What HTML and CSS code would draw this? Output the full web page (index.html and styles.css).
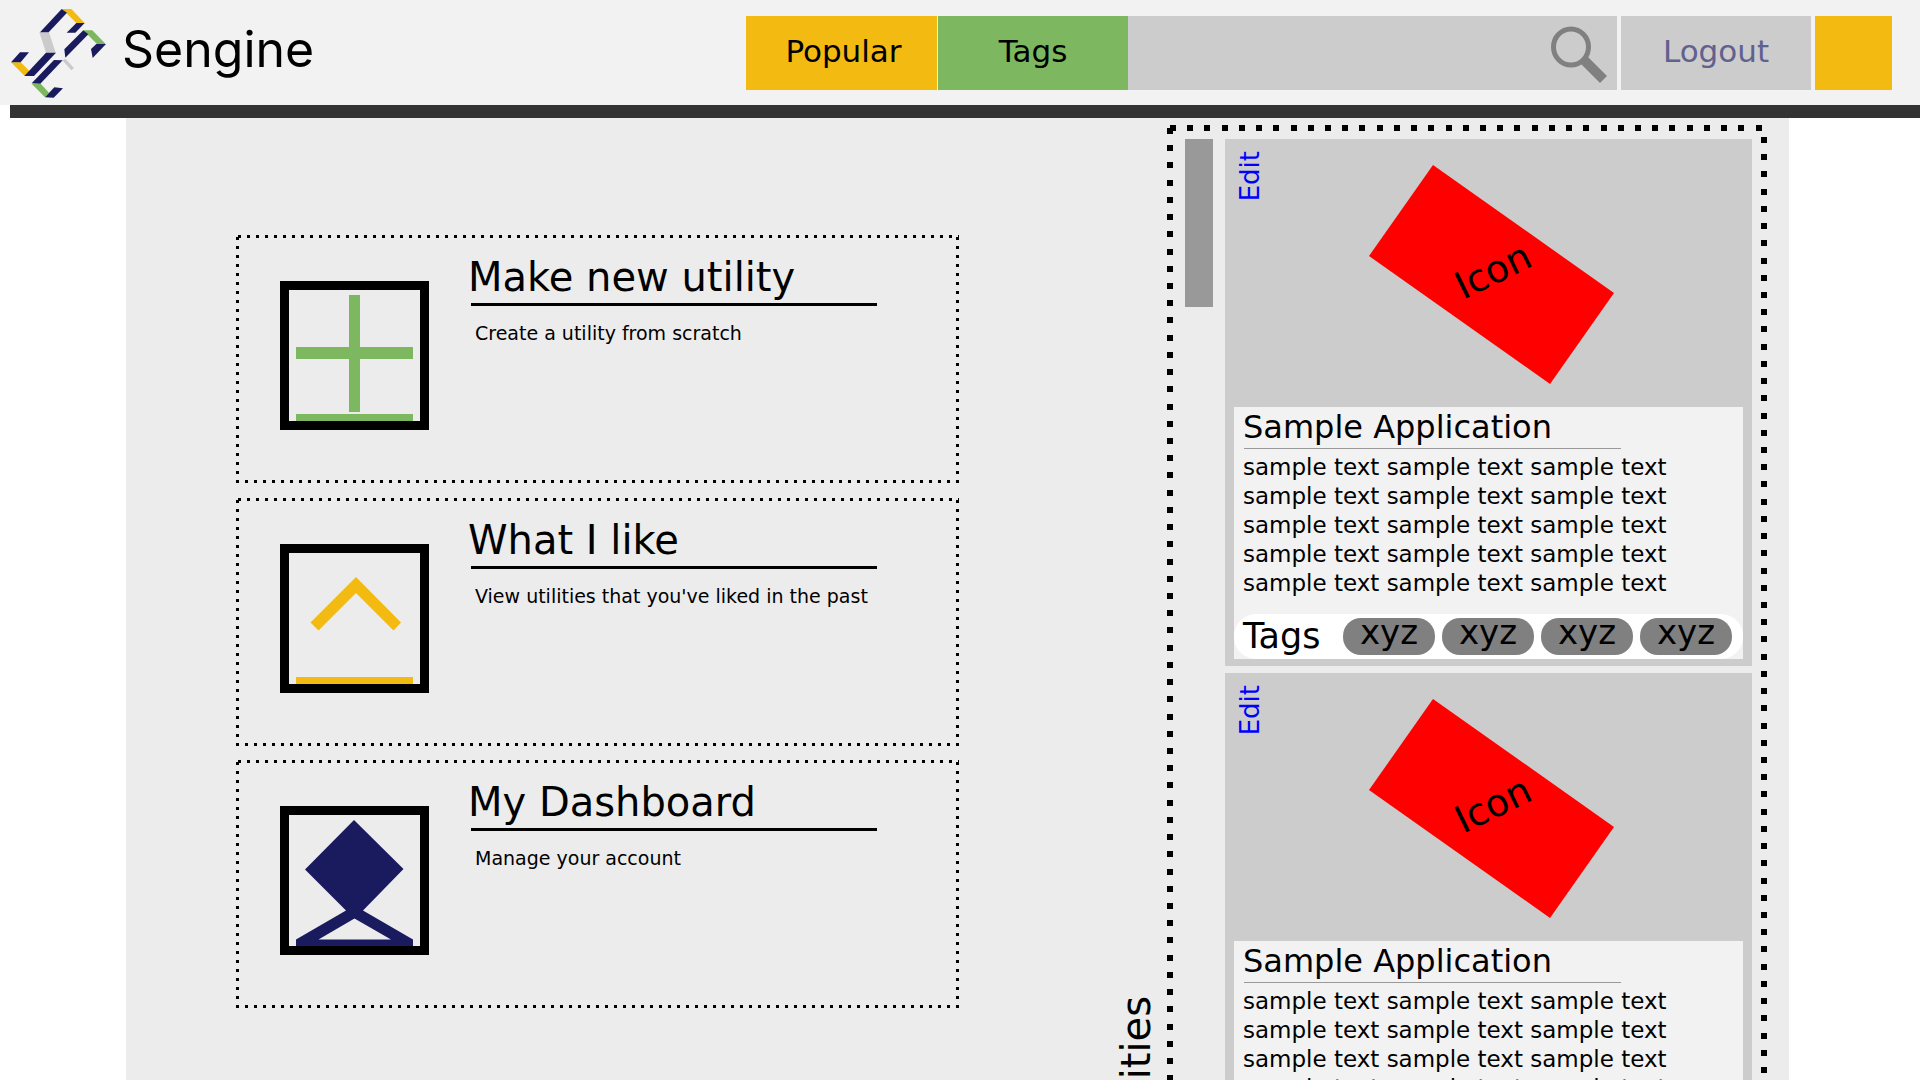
FILE: index.html
```html
<!DOCTYPE html>
<html lang="en">
<head>
<meta charset="utf-8">
<title>Sengine</title>
<link rel="stylesheet" href="styles.css">
</head>
<body>
<header class="header">
  <a class="brand" href="#">
    <svg class="logo" viewBox="24 24 300 276" aria-hidden="true">
      <g fill="#cbcbcb">
        <path d="M118 97H147L167 158H138Z"/>
        <path d="M187 181L197 177L222 204L214 211Z"/>
      </g>
      <g fill="#f3ba12">
        <path d="M187 27H214L254 69H229Z"/>
        <path d="M33 187H62L89 214L74 228Z"/>
      </g>
      <g fill="#7db75f">
        <path d="M250 91H277L317 132H291Z"/>
        <path d="M95 251H122L147 278L135 292Z"/>
      </g>
      <g fill="#1a1a5e">
        <path d="M120 97H146L201 38L185 27Z"/>
        <path d="M229 69H254L226 98H200Z"/>
        <path d="M138 158H168L102 228H73Z"/>
        <path d="M33 187L60 157H87L62 187Z"/>
        <path d="M193 148L250 91L265 103L196 173Z"/>
        <path d="M273 147L289 132H318L278 174Z"/>
        <path d="M95 250L162 180L188 181L121 251Z"/>
        <path d="M135 292L163 262L189 265L161 293Z"/>
      </g>
    </svg>
    <span class="brand-name">Sengine</span>
  </a>
  <nav class="nav">
    <a class="tab tab-popular" href="#">Popular</a>
    <a class="tab tab-tags" href="#">Tags</a>
    <form class="search">
      <input class="search-input" type="search" aria-label="Search">
      <button class="search-button" type="button" aria-label="Search">
        <svg class="search-icon" viewBox="0 0 60 60" aria-hidden="true">
          <ellipse cx="22" cy="23" rx="17.500" ry="18" fill="none" stroke="#808080" stroke-width="5"/>
          <path d="M32 40L38 32L58 52L51 59Z" fill="#808080"/>
        </svg>
      </button>
    </form>
    <button class="tab tab-logout" type="button">Logout</button>
    <button class="profile" type="button" aria-label="Profile"></button>
  </nav>
</header>
<div class="bar"></div>
<main class="main">
  <section class="actions">
    <article class="action">
      <svg class="action-icon" viewBox="0 0 149 149" aria-hidden="true">
        <path d="M69 14H80V66H133V78H80V131H69V78H16V66H69ZM16 133H133V144H16Z" fill="#7db75f"/>
        <rect class="icon-frame" x="4.5" y="4.5" width="140" height="140"/>
      </svg>
      <div class="action-body">
        <h2 class="action-title">Make new utility</h2>
        <p class="action-text">Create a utility from scratch</p>
      </div>
    </article>
    <article class="action">
      <svg class="action-icon" viewBox="0 0 149 149" aria-hidden="true">
        <path d="M76 33L121 78.500L113.500 86.500L76 49L38.500 86.500L30.500 78.500ZM16 133H133V144H16Z" fill="#f3ba12"/>
        <rect class="icon-frame" x="4.5" y="4.5" width="140" height="140"/>
      </svg>
      <div class="action-body">
        <h2 class="action-title">What I like</h2>
        <p class="action-text">View utilities that you've liked in the past</p>
      </div>
    </article>
    <article class="action">
      <svg class="action-icon" viewBox="0 0 149 149" aria-hidden="true">
        <path fill-rule="evenodd" d="M74 14L123.500 63L83 104.500L133 133.500V144H16V133.500L66 104.500L25 63.500ZM74.500 112.500L38.500 133.500H111Z" fill="#1a1a5e"/>
        <rect class="icon-frame" x="4.5" y="4.5" width="140" height="140"/>
      </svg>
      <div class="action-body">
        <h2 class="action-title">My Dashboard</h2>
        <p class="action-text">Manage your account</p>
      </div>
    </article>
  </section>
  <h2 class="side-label">Utilities</h2>
  <section class="feed">
    <div class="thumb"></div>
    <div class="apps">
      <article class="app">
        <div class="app-cover">
          <a class="edit" href="#">Edit</a>
          <svg class="cover" viewBox="0 0 246 220" role="img" aria-label="Icon">
            <path d="M64 0L245 128L181 219L0 91Z" fill="#f00"/>
            <text transform="translate(94 135) rotate(-26)">Icon</text>
          </svg>
        </div>
        <div class="app-info">
          <h3 class="app-title">Sample Application</h3>
          <p class="app-text">sample text sample text sample text<br>sample text sample text sample text<br>sample text sample text sample text<br>sample text sample text sample text<br>sample text sample text sample text</p>
          <div class="tags">
            <span class="tags-label">Tags</span>
            <a class="tag" href="#">xyz</a>
            <a class="tag" href="#">xyz</a>
            <a class="tag" href="#">xyz</a>
            <a class="tag" href="#">xyz</a>
          </div>
        </div>
      </article>
      <article class="app">
        <div class="app-cover">
          <a class="edit" href="#">Edit</a>
          <svg class="cover" viewBox="0 0 246 220" role="img" aria-label="Icon">
            <path d="M64 0L245 128L181 219L0 91Z" fill="#f00"/>
            <text transform="translate(94 135) rotate(-26)">Icon</text>
          </svg>
        </div>
        <div class="app-info">
          <h3 class="app-title">Sample Application</h3>
          <p class="app-text">sample text sample text sample text<br>sample text sample text sample text<br>sample text sample text sample text<br>sample text sample text sample text<br>sample text sample text sample text</p>
          <div class="tags">
            <span class="tags-label">Tags</span>
            <a class="tag" href="#">xyz</a>
            <a class="tag" href="#">xyz</a>
            <a class="tag" href="#">xyz</a>
            <a class="tag" href="#">xyz</a>
          </div>
        </div>
      </article>
    </div>
  </section>
</main>
</body>
</html>
```
FILE: styles.css
```css
* {
  box-sizing: border-box;
}

body {
  height: 100vh;
  margin: 0;
  overflow: hidden;
  background: #fff;
  color: #000;
  font-family: "DejaVu Sans", sans-serif;
}

h2, h3, p {
  margin: 0;
  font-weight: 400;
}

a {
  color: inherit;
  text-decoration: none;
}

button, input {
  border: 0;
  padding: 0;
  font: inherit;
}

/* Header */
.header {
  display: flex;
  align-items: flex-start;
  padding: 8px 28px 0 8px;
  height: 105px;
  background: #f2f2f2;
}

.brand {
  display: flex;
  flex: 0 0 738px;
  gap: 14px;
}

.logo {
  width: 100px;
  height: 92px;
}

.brand-name {
  font: 50px/82px Inter, sans-serif;
}

.nav {
  display: flex;
  flex: 1;
  min-width: 0;
  height: 82px;
  padding-top: 8px;
}

.tab {
  flex: 0 0 190px;
  padding: 0;
  background: #ccc;
  font-size: 31px;
  line-height: 70px;
  text-align: center;
}

.tab-popular {
  flex-basis: 191px;
  margin-right: 1px;
  background: #f3ba12;
  padding-left: 4px;
}

.tab-tags {
  background: #7db75f;
}

.search {
  display: flex;
  flex: 1;
  min-width: 0;
  margin-right: 4px;
  background: #ccc;
}

.search-input {
  flex: 1;
  min-width: 0;
  padding: 0 16px;
  background: none;
  font-size: 31px;
}

.search-button {
  display: flex;
  padding: 8px 8px 0 0;
  background: none;
}

.search-icon {
  width: 60px;
  height: 60px;
}

.tab-logout {
  margin-right: 4px;
  padding-bottom: 4px;
  color: #61618f;
}

.profile {
  flex: 0 0 77px;
  background: #f3ba12;
}

.bar {
  height: 13px;
  margin-left: 10px;
  background: #333;
}

/* Page body */
.main {
  display: flex;
  margin: 0 131px 0 126px;
  padding: 7px 22px 0 110px;
  background: #ececec;
}

/* Action cards, framed by square dots */
.actions {
  display: grid;
  flex: 1;
  align-self: flex-start;
  align-content: space-between;
  min-height: 773px;
  margin: 110px 153px 0 0;
}

.action {
  --across: repeating-linear-gradient(to right, #000 0 3px, transparent 3px 9px);
  --down: repeating-linear-gradient(to bottom, #000 0 3px, transparent 3px 9px);
  display: flex;
  gap: 39px;
  min-height: 248px;
  padding: 0 44px;
  background:
    var(--across) 2px 0 / 100% 3px no-repeat,
    var(--across) 0 100% / 100% 3px no-repeat,
    var(--down) 0 2px / 3px 100% no-repeat,
    var(--down) 100% 2px / 3px 100% no-repeat;
}

.action-icon {
  flex: none;
  width: 149px;
  height: 149px;
  margin-top: 46px;
}

.icon-frame {
  fill: none;
  stroke: #000;
  stroke-width: 9px;
}

.action-body {
  padding-top: 17px;
}

.action-title {
  font-size: 40px;
  line-height: 50px;
}

.action-title::after {
  content: "";
  display: block;
  width: 406px;
  height: 3px;
  margin: 1px 0 0 3px;
  background: #000;
}

.action-text {
  padding: 15px 0 0 7px;
  font-size: 19px;
  line-height: 24px;
}

/* Vertical heading beside the feed */
.side-label {
  align-self: flex-end;
  margin: 0 7px 68px 0;
  font-size: 40px;
  line-height: 48px;
  writing-mode: vertical-rl;
  transform: rotate(180deg);
}

/* Feed */
.feed {
  --across: repeating-linear-gradient(to right, #000 0 6px, transparent 6px calc(155px / 9));
  --down: repeating-linear-gradient(to bottom, #000 0 6px, transparent 6px calc(155px / 9));
  display: flex;
  flex: 0 0 600px;
  gap: 12px;
  padding: 14px 15px 15px 18px;
  background:
    var(--across) 3px 0 / 100% 6px no-repeat,
    var(--across) 0 100% / 100% 6px no-repeat,
    var(--down) 0 3px / 6px 100% no-repeat,
    var(--down) 100% 12px / 6px 100% no-repeat;
}

.thumb {
  flex: 0 0 28px;
  height: 168px;
  background: #999;
}

.apps {
  display: flex;
  flex: 1;
  flex-direction: column;
  gap: 7px;
}

.app {
  padding: 0 9px 7px;
  background: #ccc;
}

.app-cover {
  display: flex;
  align-items: flex-start;
  height: 268px;
}

.edit {
  margin-top: 12px;
  color: #00f;
  font-size: 26px;
  line-height: 32px;
  writing-mode: vertical-rl;
  transform: rotate(180deg);
}

.cover {
  width: 246px;
  height: 220px;
  margin: 26px 0 0 103px;
  font-size: 38px;
}

.app-info {
  background: #f2f2f2;
}

.app-title {
  padding-left: 9px;
  font-size: 32px;
  line-height: 41px;
}

.app-title::after {
  content: "";
  display: block;
  width: 377px;
  height: 1px;
  margin-left: 1px;
  background: #999;
}

.app-text {
  padding: 4px 0 16px 9px;
  font-size: 23px;
  line-height: 29px;
}

.tags {
  display: flex;
  align-items: center;
  gap: 7px;
  height: 45px;
  padding: 0 11px 0 9px;
  border-radius: 22px;
  background: #fff;
}

.tags-label {
  flex: 1;
  font-size: 35px;
  line-height: 45px;
}

.tag {
  flex: 0 0 92px;
  height: 37px;
  border-radius: 18px;
  background: #808080;
  font-size: 34px;
  line-height: 28px;
  text-align: center;
}
```
